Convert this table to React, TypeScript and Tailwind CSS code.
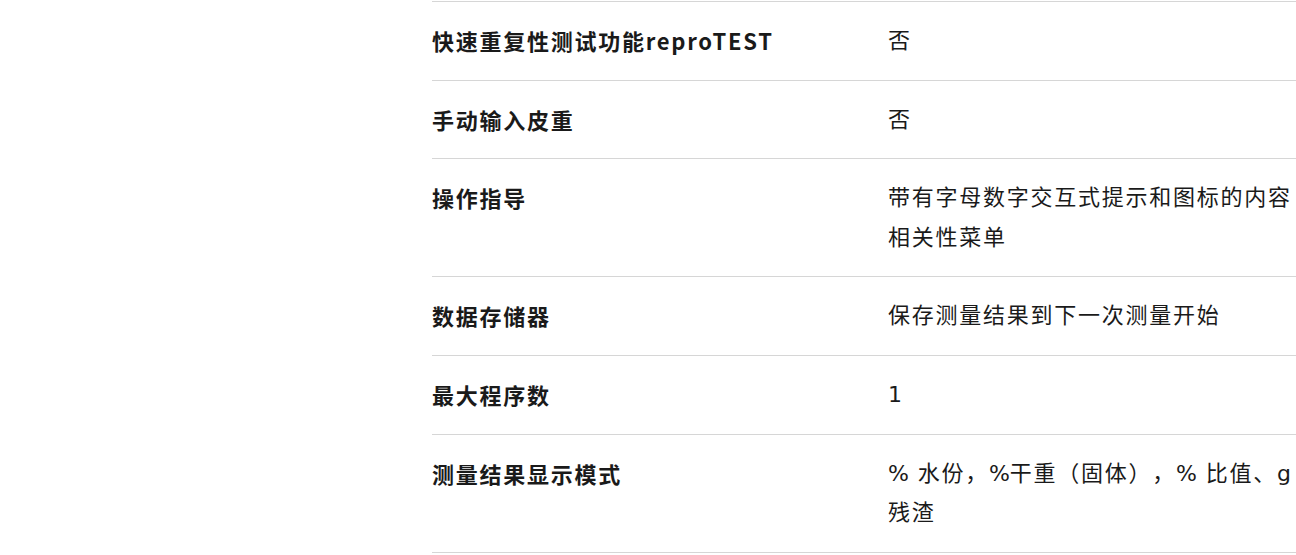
import { Fragment } from 'react'

const rows: [string, string][] = [
  ['快速重复性测试功能reproTEST', '否'],
  ['手动输入皮重', '否'],
  ['操作指导', '带有字母数字交互式提示和图标的内容相关性菜单'],
  ['数据存储器', '保存测量结果到下一次测量开始'],
  ['最大程序数', '1'],
  ['测量结果显示模式', '% 水份，%干重（固体），% 比值、g 残渣'],
]

// the % sign sits a bit tighter in the original
function Value({ text }: { text: string }) {
  const parts = text.split('%')
  return (
    <>
      {parts.map((p, i) => (
        <Fragment key={i}>
          {i > 0 && <span className="tracking-normal">%</span>}
          {p}
        </Fragment>
      ))}
    </>
  )
}

export default function App() {
  return (
    <div className="w-[1296px] h-[555px] overflow-hidden bg-white">
      <div className="pl-[432px] pt-[1px]">
        <div className="w-[864px] border-b border-[#d6d6d6]">
          {rows.map(([k, v]) => (
            <div key={k} className="flex border-t border-[#d6d6d6] py-[19px] text-[22px] leading-[39.6px] tracking-[1.75px] text-[#1a1a1a] [text-spacing-trim:space-all]">
              <div className="w-[456px] shrink-0 font-bold font-['Noto_Sans_CJK_SC',sans-serif]">{k}</div>
              <div className="w-[408px] shrink-0 font-['DejaVu_Sans','Noto_Sans_CJK_SC',sans-serif]">
                <Value text={v} />
              </div>
            </div>
          ))}
        </div>
      </div>
    </div>
  )
}
